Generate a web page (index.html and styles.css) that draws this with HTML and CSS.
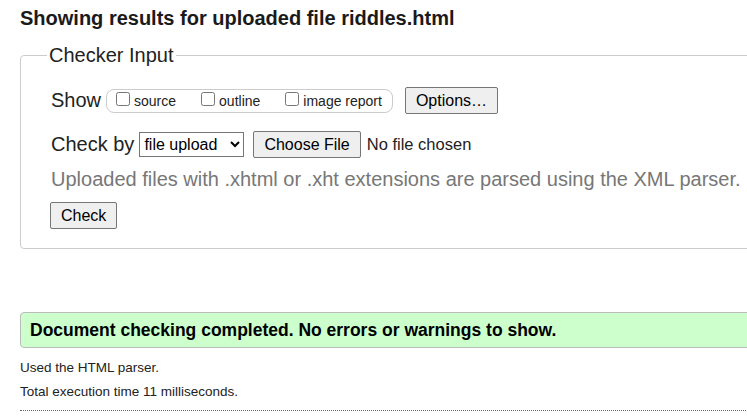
FILE: index.html
```html
<!DOCTYPE html>
<html>
<head>
<meta charset="utf-8">
<link rel="stylesheet" href="styles.css">
</head>
<body>
<div class="page">
  <h2 class="title">Showing results for uploaded file riddles.html</h2>
  <fieldset class="checker">
    <legend class="legend">Checker Input</legend>
    <div class="row show-row">
      <span class="lbl">Show</span>
      <span class="opts">
        <label class="opt"><input type="checkbox" class="cb">source</label>
        <label class="opt"><input type="checkbox" class="cb">outline</label>
        <label class="opt last"><input type="checkbox" class="cb">image report</label>
      </span>
      <button class="btn options">Options…</button>
    </div>
    <div class="row by-row">
      <span class="lbl">Check by</span>
      <select class="sel"><option>file upload</option></select>
      <button class="btn choose">Choose File</button>
      <span class="nofile">No file chosen</span>
    </div>
    <p class="hint">Uploaded files with .xhtml or .xht extensions are parsed using the XML parser.</p>
    <div class="row">
      <button class="btn check">Check</button>
    </div>
  </fieldset>
  <div class="success">Document checking completed. No errors or warnings to show.</div>
  <p class="details">Used the HTML parser.</p>
  <p class="details">Total execution time 11 milliseconds.</p>
  <hr class="sep">
</div>
</body>
</html>
```
FILE: styles.css
```css
html, body {
  margin: 0;
  padding: 0;
  overflow: hidden;
  background: #fff;
}
body {
  font-family: "Liberation Sans", Arial, sans-serif;
  color: #222;
}
.page {
  width: 780px;
  padding: 0 0 0 20px;
}
.title {
  font-size: 20px;
  font-weight: bold;
  margin: 0;
  padding-top: 6px;
  line-height: 24px;
  color: #1a1a1a;
}
.checker {
  margin: 14px 0 0 0;
  padding: 0 0 19px 30px;
  border: 1px solid #ccc;
  border-radius: 4px;
}
.legend {
  font-size: 20px;
  padding: 0 2px;
  margin-left: -4px;
  color: #222;
}
.row {
  display: flex;
  align-items: center;
}
.show-row {
  margin-top: 20px;
}
.by-row {
  margin-top: 17px;
}
.lbl {
  font-size: 20px;
  margin-right: 5px;
}
.opts {
  display: inline-flex;
  align-items: center;
  border: 1px solid #ccc;
  border-radius: 8px;
  height: 22px;
  padding: 0 10px 0 9px;
  font-size: 14px;
}
.opt {
  display: inline-flex;
  align-items: center;
  margin-right: 25px;
}
.opt.last {
  margin-right: 0;
}
.cb {
  margin: 0 4px 3px 0;
  width: 14px;
  height: 14px;
}
.btn {
  font-family: "Liberation Sans", Arial, sans-serif;
  font-size: 16px;
  background: #efefef;
  border: 1px solid #767676;
  border-radius: 2px;
  color: #000;
  padding: 2px 10px;
  height: 27px;
}
.options {
  margin-left: 12px;
}
.sel {
  font-family: "Liberation Sans", Arial, sans-serif;
  font-size: 16px;
  height: 25px;
  width: 105px;
  margin-left: 0;
  border: 1px solid #767676;
  border-radius: 0;
  background: #fff;
}
.choose {
  margin-left: 9px;
}
.nofile {
  font-size: 16.5px;
  margin-left: 6px;
  color: #222;
}
.hint {
  font-size: 20px;
  color: #777;
  margin: 10px 0 11px 0;
}
.check {
  margin-left: -1px;
}
.success {
  margin-top: 63px;
  background: #ccffcc;
  border: 1px solid #bbb;
  border-radius: 4px;
  padding: 7px 9px 6px 9px;
  font-size: 17.5px;
  font-weight: bold;
  color: #000;
}
.details {
  font-size: 13.5px;
  margin: 12px 0 0 0;
  color: #222;
}
.details + .details {
  margin-top: 9px;
}
.sep {
  border: 0;
  border-top: 1px dotted #666;
  margin: 11px 0 0 0;
}
```
